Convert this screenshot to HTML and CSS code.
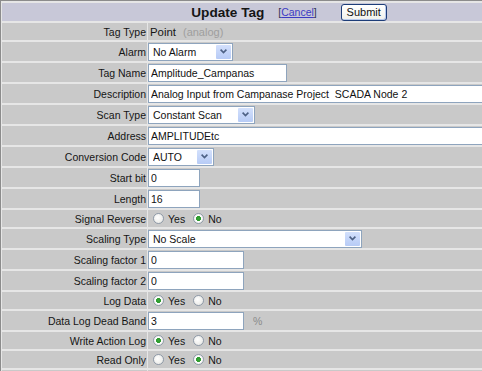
FILE: index.html
```html
<!DOCTYPE html>
<html lang="en">
<head>
  <meta charset="UTF-8">
  <title>Update Tag</title>
  <link rel="stylesheet" href="styles.css">
</head>
<body>
  <form class="tag-form" onsubmit="return false;">
    <table class="tag-table">
      <thead>
        <tr>
          <th colspan="2" class="head">
            <span class="head-title">Update Tag</span>
            <span class="cancel">[<a href="#">Cancel</a>]</span>
            <button type="submit" class="btn-submit">Submit</button>
          </th>
        </tr>
      </thead>
      <tbody>
        <tr class="row-text">
          <td class="lbl">Tag Type</td>
          <td class="val"><span class="point">Point</span><span class="muted">(analog)</span></td>
        </tr>
        <tr class="row-in">
          <td class="lbl">Alarm</td>
          <td class="val">
            <span class="sel sel-alarm">
              <select><option>No Alarm</option></select>
              <span class="sel-btn"><svg width="7" height="5" viewBox="0 0 7 5"><path d="M0.6 0.6 L3.5 3.6 L6.4 0.6" stroke="#4d6185" stroke-width="1.6" fill="none"/></svg></span>
            </span>
          </td>
        </tr>
        <tr class="row-in">
          <td class="lbl">Tag Name</td>
          <td class="val"><input type="text" class="txt txt-name" value="Amplitude_Campanas"></td>
        </tr>
        <tr class="row-in">
          <td class="lbl">Description</td>
          <td class="val"><input type="text" class="txt txt-wide" value="Analog Input from Campanase Project  SCADA Node 2"></td>
        </tr>
        <tr class="row-in">
          <td class="lbl">Scan Type</td>
          <td class="val">
            <span class="sel sel-scan">
              <select><option>Constant Scan</option></select>
              <span class="sel-btn"><svg width="7" height="5" viewBox="0 0 7 5"><path d="M0.6 0.6 L3.5 3.6 L6.4 0.6" stroke="#4d6185" stroke-width="1.6" fill="none"/></svg></span>
            </span>
          </td>
        </tr>
        <tr class="row-in">
          <td class="lbl">Address</td>
          <td class="val"><input type="text" class="txt txt-wide" value="AMPLITUDEtc"></td>
        </tr>
        <tr class="row-in">
          <td class="lbl">Conversion Code</td>
          <td class="val">
            <span class="sel sel-conv">
              <select><option>AUTO</option></select>
              <span class="sel-btn"><svg width="7" height="5" viewBox="0 0 7 5"><path d="M0.6 0.6 L3.5 3.6 L6.4 0.6" stroke="#4d6185" stroke-width="1.6" fill="none"/></svg></span>
            </span>
          </td>
        </tr>
        <tr class="row-in">
          <td class="lbl">Start bit</td>
          <td class="val"><input type="text" class="txt txt-short" value="0"></td>
        </tr>
        <tr class="row-in">
          <td class="lbl">Length</td>
          <td class="val"><input type="text" class="txt txt-short" value="16"></td>
        </tr>
        <tr class="row-text">
          <td class="lbl">Signal Reverse</td>
          <td class="val">
            <div class="radios">
              <label class="opt"><input type="radio" name="rev">Yes</label>
              <label class="opt"><input type="radio" name="rev" checked>No</label>
            </div>
          </td>
        </tr>
        <tr class="row-in">
          <td class="lbl">Scaling Type</td>
          <td class="val">
            <span class="sel sel-scale">
              <select><option>No Scale</option></select>
              <span class="sel-btn"><svg width="7" height="5" viewBox="0 0 7 5"><path d="M0.6 0.6 L3.5 3.6 L6.4 0.6" stroke="#4d6185" stroke-width="1.6" fill="none"/></svg></span>
            </span>
          </td>
        </tr>
        <tr class="row-in">
          <td class="lbl">Scaling factor 1</td>
          <td class="val"><input type="text" class="txt txt-mid" value="0"></td>
        </tr>
        <tr class="row-in">
          <td class="lbl">Scaling factor 2</td>
          <td class="val"><input type="text" class="txt txt-mid" value="0"></td>
        </tr>
        <tr class="row-text">
          <td class="lbl">Log Data</td>
          <td class="val">
            <div class="radios">
              <label class="opt"><input type="radio" name="log" checked>Yes</label>
              <label class="opt"><input type="radio" name="log">No</label>
            </div>
          </td>
        </tr>
        <tr class="row-in">
          <td class="lbl">Data Log Dead Band</td>
          <td class="val"><input type="text" class="txt txt-mid" value="3"><span class="unit">%</span></td>
        </tr>
        <tr class="row-text">
          <td class="lbl">Write Action Log</td>
          <td class="val">
            <div class="radios">
              <label class="opt"><input type="radio" name="wal" checked>Yes</label>
              <label class="opt"><input type="radio" name="wal">No</label>
            </div>
          </td>
        </tr>
        <tr class="row-text">
          <td class="lbl">Read Only</td>
          <td class="val">
            <div class="radios">
              <label class="opt"><input type="radio" name="ro">Yes</label>
              <label class="opt"><input type="radio" name="ro" checked>No</label>
            </div>
          </td>
        </tr>
        <tr class="row-text">
          <td class="lbl"></td>
          <td class="val"></td>
        </tr>
      </tbody>
    </table>
  </form>
</body>
</html>
```

FILE: styles.css
```css
html {
  overflow: hidden;
}
body {
  margin: 0;
  background-color: #e4e4e4;
  font-family: "Liberation Sans", Arial, sans-serif;
  font-size: 10.5px;
  color: #151515;
}
.tag-form {
  margin: 0;
}
.tag-table {
  width: 577px;
  border-collapse: separate;
  border-spacing: 1px 2px;
  border-top: 1px solid #8c8c8c;
  border-left: 1px solid #8c8c8c;
  background-color: #e6e6e6;
}
.head {
  height: 18px;
  padding: 0;
  background-color: #c8c8d8;
  text-align: center;
  white-space: nowrap;
  font-weight: normal;
}
.head-title {
  font-size: 13.6px;
  font-weight: bold;
  vertical-align: middle;
}
.cancel {
  margin-left: 11px;
  color: #333355;
  vertical-align: middle;
}
.cancel a {
  color: #3b3bc4;
}
.btn-submit {
  margin-left: 21px;
  width: 46px;
  height: 17px;
  padding: 0;
  vertical-align: middle;
  font-family: "Liberation Sans", Arial, sans-serif;
  font-size: 11px;
  color: #111;
  background: linear-gradient(#ffffff, #f1f1ec);
  border: 1px solid #1d3d78;
  border-radius: 3px;
  box-shadow: inset -1px -1px 0 #b8c9ec;
}
td {
  padding: 0;
  background-color: #c9c9c9;
  vertical-align: middle;
  white-space: nowrap;
}
.row-in td {
  height: 19px;
}
.row-text td {
  height: 17px;
}
.lbl {
  width: 144px;
  padding-right: 1px;
  text-align: right;
}
.val {
  padding-left: 0;
}
.point {
  font-size: 11.4px;
  margin-left: 2px;
}
.muted {
  margin-left: 7px;
  font-size: 11px;
  color: #9e9e9e;
}
.txt {
  box-sizing: border-box;
  height: 18px;
  margin: 0;
  padding: 0 2px;
  border: 1px solid #8ea4bd;
  background-color: #fff;
  font-family: "Liberation Sans", Arial, sans-serif;
  font-size: 10.5px;
  color: #111;
  vertical-align: middle;
}
.txt-name { width: 139px; }
.txt-wide { width: 360px; }
.txt-short { width: 52px; }
.txt-mid { width: 96px; }
.unit {
  margin-left: 9px;
  color: #8a8a8a;
  vertical-align: middle;
}
.sel {
  box-sizing: border-box;
  display: inline-flex;
  height: 18px;
  border: 1px solid #8ea4bd;
  background-color: #fff;
  vertical-align: middle;
}
.sel select {
  flex: 1;
  min-width: 0;
  appearance: none;
  -webkit-appearance: none;
  margin: 0;
  padding: 0 0 0 4px;
  border: none;
  outline: none;
  background: transparent;
  font-family: "Liberation Sans", Arial, sans-serif;
  font-size: 10.5px;
  color: #111;
}
.sel-btn {
  display: flex;
  align-items: center;
  justify-content: center;
  width: 15px;
  margin: 1px;
  background: linear-gradient(#d3e0fc, #b7cbf6);
  border-radius: 1px;
}
.sel-alarm { width: 85px; }
.sel-scan { width: 107px; }
.sel-conv { width: 66px; }
.sel-scale { width: 214px; }
.radios {
  display: flex;
  align-items: center;
}
.opt {
  display: flex;
  align-items: center;
  margin-left: 5px;
  margin-right: 3px;
}
.opt input {
  appearance: none;
  -webkit-appearance: none;
  box-sizing: border-box;
  width: 11px;
  height: 11px;
  margin: 0 4px 0 0;
  border: 1px solid #8f9aa8;
  border-radius: 50%;
  background: radial-gradient(circle at 40% 40%, #ffffff, #e4e4e0);
}
.opt input:checked {
  background: radial-gradient(circle, #3aa53a 0, #2b9a2b 2.2px, #ffffff 2.8px, #e4e4e0 100%);
}
```
